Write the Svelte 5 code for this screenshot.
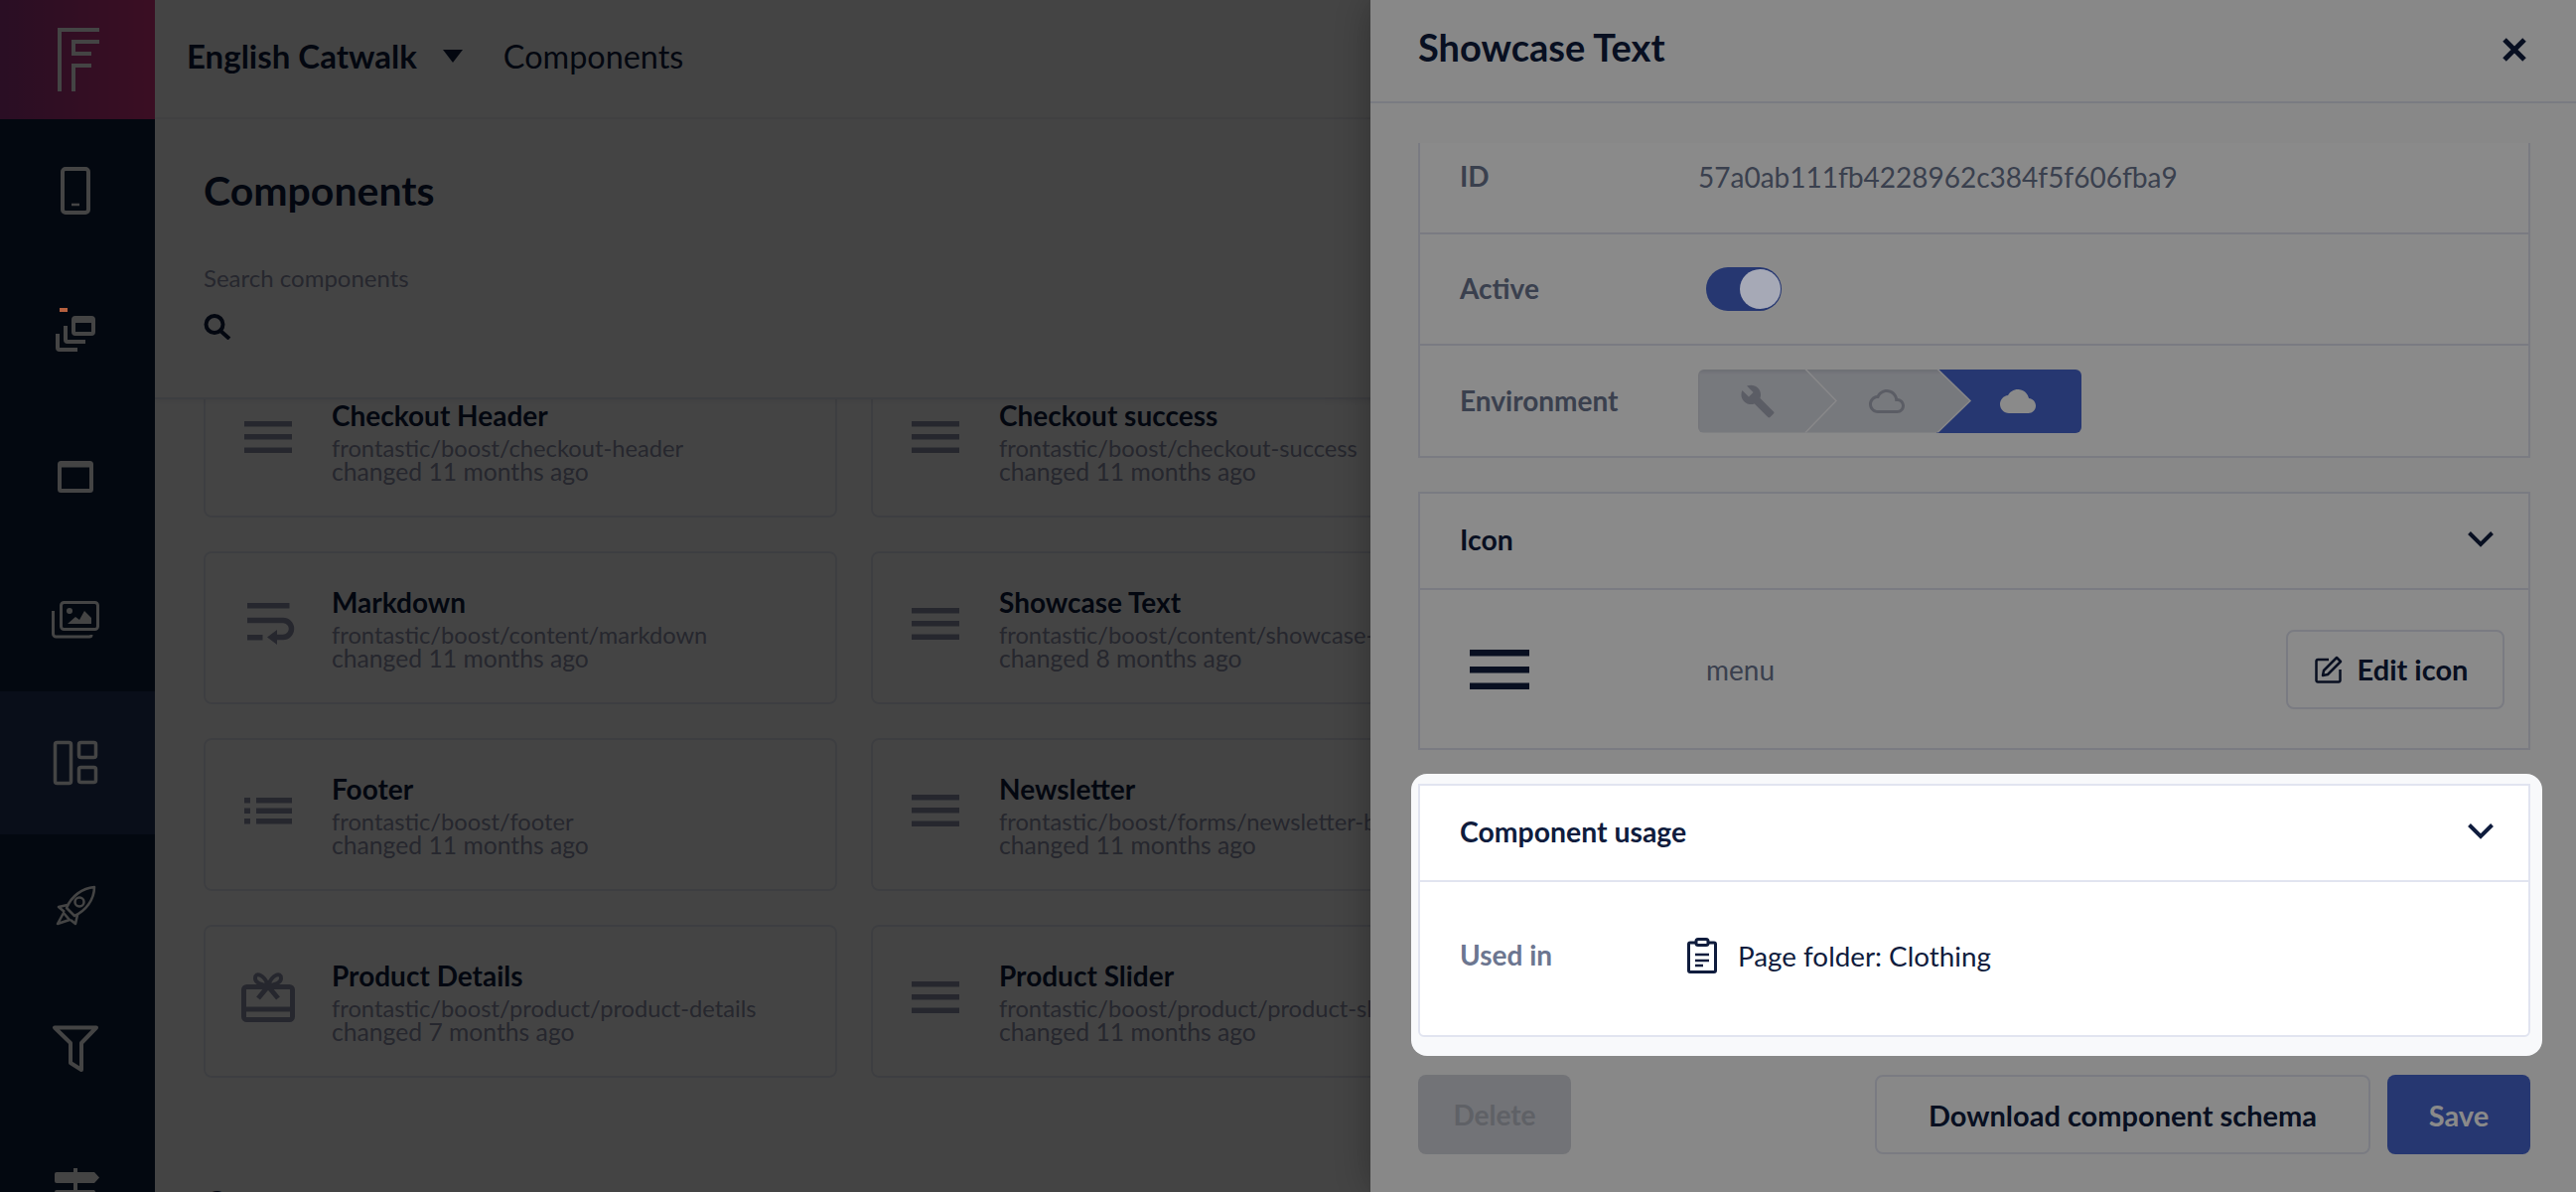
<script>
  const navItems = ['phone', 'pages', 'window', 'images', 'layout', 'rocket', 'filter', 'sign'];

  const cards = [
    { icon: 'menu', title: 'Checkout Header', path: 'frontastic/boost/checkout-header', age: '11 months' },
    { icon: 'menu', title: 'Checkout success', path: 'frontastic/boost/checkout-success', age: '11 months' },
    { icon: 'wrap', title: 'Markdown', path: 'frontastic/boost/content/markdown', age: '11 months' },
    { icon: 'menu', title: 'Showcase Text', path: 'frontastic/boost/content/showcase-text', age: '8 months' },
    { icon: 'list', title: 'Footer', path: 'frontastic/boost/footer', age: '11 months' },
    { icon: 'menu', title: 'Newsletter', path: 'frontastic/boost/forms/newsletter-block', age: '11 months' },
    { icon: 'gift', title: 'Product Details', path: 'frontastic/boost/product/product-details', age: '7 months' },
    { icon: 'menu', title: 'Product Slider', path: 'frontastic/boost/product/product-slider', age: '11 months' }
  ];
</script>

<div class="page">
  <aside class="sidebar">
    <div class="logo">
      <svg width="48" height="72" viewBox="0 0 48 72" fill="none" stroke="#fff" stroke-width="4">
        <path d="M8 68V6H48" />
        <path d="M48 18H22V30H40" />
        <path d="M40 42H22V68" />
      </svg>
    </div>
    {#each navItems as item}
      <div class="nav-item" class:active={item === 'layout'}>
        <svg class="nav-icon" width="48" height="48" viewBox="0 0 48 48" fill="none" stroke="#fff" stroke-width="4">
          {#if item === 'phone'}
            <rect x="11" y="2" width="26" height="44" rx="3" />
            <path d="M20 38H28" stroke-width="2.5" />
          {:else if item === 'pages'}
            <rect x="22" y="8" width="20" height="16" rx="2" />
            <path d="M22 10H42" stroke-width="6" />
            <path d="M14 16V30a2 2 0 0 0 2 2H34" />
            <path d="M6 24V38a2 2 0 0 0 2 2H26" />
          {:else if item === 'window'}
            <rect x="8" y="10" width="32" height="28" rx="1.5" />
            <path d="M8 12H40" stroke-width="5" />
          {:else if item === 'images'}
            <rect x="9.5" y="6.5" width="37" height="27" rx="3" stroke-width="3" />
            <path d="M1.500 15V38a3 3 0 0 0 3 3H38a2 2 0 0 0 2-2" stroke-width="3" />
            <circle cx="18" cy="15" r="3" fill="#fff" stroke="none" />
            <path d="M16 28L24 21L28 24L33 15L40 22V28Z" fill="#fff" stroke="none" />
          {:else if item === 'layout'}
            <rect x="3.500" y="3.500" width="16" height="41" rx="2" stroke-width="3.500" />
            <rect x="27.500" y="3.500" width="17" height="15" rx="2" stroke-width="3.500" />
            <rect x="27.500" y="28.500" width="17" height="15" rx="2" stroke-width="3.500" />
          {:else if item === 'rocket'}
            <g stroke-width="2.500" stroke-linejoin="round">
              <path d="M43 5C31 6 20 14 15 26L23 34C34 29 43 18 43 5Z" />
              <circle cx="28" cy="20" r="4.500" />
              <path d="M16 23L7 25L13 30" />
              <path d="M26 33L24 42L19 38" />
              <path d="M12 31L6 42L18 38Z" />
            </g>
          {:else if item === 'filter'}
            <path d="M3 2.500H45L30 18V45L19 38V18Z" stroke-linejoin="round" />
          {:else}
            <path d="M24 0V48" />
            <path d="M5 4H43L48 9.500L43 15H5a2 2 0 0 1-2-2V6a2 2 0 0 1 2-2Z" fill="#fff" stroke="none" />
            <path d="M5 22H43L46 27V34H3V24a2 2 0 0 1 2-2Z" fill="#fff" stroke="none" />
          {/if}
        </svg>
      </div>
    {/each}
  </aside>

  <main class="main">
    <header class="topbar">
      <span class="project">English Catwalk</span>
      <svg class="caret" width="20" height="13" viewBox="0 0 20 13"><path d="M0 0H20L10 13Z" fill="#0f1c3d" /></svg>
      <span class="crumb">Components</span>
    </header>

    <section class="search-head">
      <h1>Components</h1>
      <div class="search-label">Search components</div>
      <svg class="search-icon" width="28" height="26" viewBox="0 0 28 26" fill="none" stroke="#0f1c3d" stroke-width="4">
        <circle cx="11" cy="10.500" r="8.500" />
        <path d="M17 17L26 25" />
      </svg>
    </section>

    <div class="list">
      <div class="grid">
        {#each cards as card}
          <article class="card">
            <svg class="card-icon" width="54" height="54" viewBox="0 0 54 54" fill="#8e91ab">
              {#if card.icon === 'menu'}
                <rect x="3" y="11" width="48" height="5.500" />
                <rect x="3" y="24" width="48" height="5.500" />
                <rect x="3" y="37.500" width="48" height="5.500" />
              {:else if card.icon === 'wrap'}
                <rect x="6" y="6" width="42.500" height="5.500" />
                <rect x="6" y="38" width="15.500" height="5.500" />
                <path d="M6 23.500H42a8.500 8.500 0 0 1 0 17H31" fill="none" stroke="#8e91ab" stroke-width="5.500" />
                <path d="M26 40.500L36 33V48Z" />
              {:else if card.icon === 'list'}
                <rect x="3" y="14" width="6" height="5.500" />
                <rect x="3" y="24.500" width="6" height="5.500" />
                <rect x="3" y="35" width="6" height="5.500" />
                <rect x="15" y="14" width="36" height="5.500" />
                <rect x="15" y="24.500" width="36" height="5.500" />
                <rect x="15" y="35" width="36" height="5.500" />
              {:else}
                <g fill="none" stroke="#8e91ab" stroke-width="5">
                  <rect x="2.500" y="16.500" width="49" height="33" rx="3" />
                  <path d="M2 39H52" />
                  <path d="M27 15C23 4 14 1 14 8C14 12 20 15 27 15C34 15 40 12 40 8C40 1 31 4 27 15Z" stroke-width="4" />
                  <path d="M27 16L17 28M27 16L37 28" />
                </g>
              {/if}
            </svg>
            <div class="card-text">
              <h3>{card.title}</h3>
              <p class="card-path">{card.path}</p>
              <p class="card-age">changed {card.age} ago</p>
            </div>
          </article>
        {/each}
      </div>
      <h2 class="next-heading">Content</h2>
    </div>
  </main>

  <div class="backdrop"></div>

  <div class="panel">
    <header class="panel-head">
      <h2>Showcase Text</h2>
      <svg class="close" width="24" height="24" viewBox="0 0 24 24" stroke="#0f1c3d" stroke-width="5"><path d="M2 2L22 22M22 2L2 22" /></svg>
    </header>

    <div class="panel-body">
      <section class="box box-open">
        <div class="row row-id">
          <span class="label">ID</span>
          <span class="value">57a0ab111fb4228962c384f5f606fba9</span>
        </div>
        <div class="row row-active">
          <span class="label">Active</span>
          <div class="toggle"><span class="knob"></span></div>
        </div>
        <div class="row row-env">
          <span class="label">Environment</span>
          <div class="env">
            <div class="seg seg-dev">
              <svg width="36" height="36" viewBox="0 0 24 24" fill="#a9adbb"><path d="M22.700 19l-9.100-9.100c.9-2.300.4-5-1.500-6.900-2-2-5-2.400-7.400-1.300L9 6 6 9 1.600 4.700C.4 7.100.9 10.100 2.900 12.100c1.900 1.900 4.600 2.400 6.900 1.500l9.100 9.100c.4.4 1 .4 1.400 0l2.300-2.300c.5-.4.5-1.100.1-1.400z" /></svg>
            </div>
            <div class="seg seg-staging">
              <svg width="36" height="36" viewBox="0 0 24 24" fill="#a9adbb" fill-rule="evenodd"><path d="M19.350 10.040C18.670 6.590 15.640 4 12 4 9.110 4 6.600 5.640 5.350 8.040 2.340 8.360 0 10.910 0 14c0 3.310 2.690 6 6 6h13c2.760 0 5-2.240 5-5 0-2.640-2.050-4.780-4.650-4.960zM19 18H6c-2.210 0-4-1.790-4-4s1.790-4 4-4h.71C7.370 7.690 9.480 6 12 6c3.040 0 5.500 2.460 5.500 5.500v.5H19c1.660 0 3 1.340 3 3s-1.340 3-3 3z" /></svg>
            </div>
            <div class="seg-live">
              <svg width="36" height="36" viewBox="0 0 24 24" fill="#fff"><path d="M19.350 10.040C18.670 6.590 15.640 4 12 4 9.110 4 6.600 5.640 5.350 8.040 2.340 8.360 0 10.910 0 14c0 3.310 2.690 6 6 6h13c2.760 0 5-2.240 5-5 0-2.640-2.050-4.780-4.650-4.960z" /></svg>
            </div>
          </div>
        </div>
      </section>

      <section class="box">
        <div class="box-head">
          <h4>Icon</h4>
          <svg width="26" height="16" viewBox="0 0 26 16" fill="none" stroke="#0f1c3d" stroke-width="4"><path d="M1.500 1.500L13 13L24.500 1.500" /></svg>
        </div>
        <div class="icon-row">
          <svg class="big-menu" width="60" height="40" viewBox="0 0 60 40" fill="#0f1c3d">
            <rect width="60" height="6.500" />
            <rect y="17" width="60" height="6.500" />
            <rect y="33.500" width="60" height="6.500" />
          </svg>
          <span class="icon-name">menu</span>
          <button class="btn btn-edit">
            <svg width="28" height="28" viewBox="0 0 28 28" fill="none" stroke="#0f1c3d" stroke-width="2.500" stroke-linejoin="round">
              <path d="M14 4H3a1.500 1.500 0 0 0-1.500 1.500V25a1.500 1.500 0 0 0 1.500 1.500H24a1.500 1.500 0 0 0 1.500-1.500V14" />
              <path d="M22 2L26 6L13 19L8 20L9 15Z" />
            </svg>
            Edit icon
          </button>
        </div>
      </section>

      <div class="spot">
        <section class="box box-white">
          <div class="box-head">
            <h4>Component usage</h4>
            <svg width="26" height="16" viewBox="0 0 26 16" fill="none" stroke="#0f1c3d" stroke-width="4"><path d="M1.500 1.500L13 13L24.500 1.500" /></svg>
          </div>
          <div class="usage-row">
            <span class="label">Used in</span>
            <div class="usage">
              <svg width="30" height="36" viewBox="0 0 30 36" fill="none" stroke="#0f1c3d" stroke-width="3">
                <path d="M9 5H3a1.500 1.500 0 0 0-1.500 1.500V33a1.500 1.500 0 0 0 1.500 1.500H27a1.500 1.500 0 0 0 1.500-1.500V6.500A1.500 1.500 0 0 0 27 5H21" />
                <rect x="9" y="1.500" width="12" height="6" rx="2" />
                <path d="M8 17H22M8 23H22M8 28H16" stroke-width="2.500" />
              </svg>
              <span>Page folder: Clothing</span>
            </div>
          </div>
        </section>
      </div>

      <footer class="actions">
        <button class="btn btn-delete">Delete</button>
        <button class="btn btn-schema">Download component schema</button>
        <button class="btn btn-save">Save</button>
      </footer>
    </div>
  </div>

  <span class="stray-dot"></span>
</div>

<style>
  :global(body) {
    margin: 0;
    font-family: Lato, "Noto Sans", sans-serif;
    color: #0f1c3d;
  }

  h1, h2, h3, h4, p {
    margin: 0;
  }

  .page {
    position: relative;
    display: flex;
    height: 1200px;
    overflow: hidden;
    background: #fff;
  }

  .sidebar {
    flex: 0 0 156px;
    background: #0f213e;
  }

  .logo {
    display: flex;
    align-items: center;
    justify-content: center;
    height: 120px;
    padding-right: 4px;
    box-sizing: border-box;
    background: linear-gradient(90deg, #9c3686, #da3683);
  }

  .nav-item {
    display: flex;
    align-items: center;
    justify-content: center;
    height: 144px;
    padding-right: 4px;
    box-sizing: border-box;
  }

  .nav-item.active {
    background: #24365f;
  }

  .nav-icon {
    overflow: visible;
  }

  .main {
    flex: 1;
    display: flex;
    flex-direction: column;
    min-width: 0;
  }

  .topbar {
    display: flex;
    align-items: center;
    flex: none;
    height: 120px;
    padding: 0 0 6px 32px;
    box-sizing: border-box;
    border-bottom: 2px solid #f0f1f6;
    font-size: 33px;
  }

  .project {
    font-weight: 700;
  }

  .caret {
    margin: 0 41px 0 26px;
  }

  .crumb {
    font-size: 32.400px;
  }

  .search-head {
    position: relative;
    flex: none;
    height: 280px;
    padding-left: 49px;
    border-bottom: 2px solid #e5e7f0;
    box-shadow: 0 2px 6px rgba(15, 28, 61, 0.08);
    background: #fff;
  }

  h1 {
    padding-top: 49px;
    font-size: 41px;
    line-height: 46px;
    font-weight: 700;
  }

  .search-label {
    margin-top: 50px;
    font-size: 24px;
    line-height: 30px;
    color: #8e91ab;
  }

  .search-icon {
    display: block;
    margin-top: 21px;
  }

  .list {
    flex: 1;
    overflow: hidden;
    padding-left: 49px;
  }

  .grid {
    display: grid;
    grid-template-columns: 638px 638px;
    gap: 34px;
    margin-top: -35px;
  }

  .card {
    display: flex;
    align-items: center;
    height: 154px;
    box-sizing: border-box;
    padding-left: 36px;
    border: 2px solid #e5e7f0;
    border-radius: 8px;
    white-space: nowrap;
    overflow: hidden;
  }

  .card-icon {
    flex: none;
    margin: 0 37px 8px 0;
  }

  .card-text h3 {
    margin-bottom: 5px;
    font-size: 28px;
    line-height: 32px;
    font-weight: 700;
  }

  .card-text p {
    line-height: 24px;
    color: #8e91ab;
  }

  .card-path {
    font-size: 23.700px;
  }

  .card-age {
    font-size: 24.700px;
  }

  .next-heading {
    margin-top: 106px;
    font-size: 34px;
    line-height: 40px;
    font-weight: 700;
  }

  .backdrop {
    position: absolute;
    inset: 0;
    background: rgba(0, 0, 0, 0.5);
  }

  .panel {
    position: absolute;
    top: 0;
    right: 0;
    bottom: 0;
    z-index: 2;
    width: 1214px;
    background: #fcfcfc;
    box-shadow: 0 0 40px rgba(0, 0, 0, 0.3);
  }

  .panel-head {
    display: flex;
    align-items: center;
    justify-content: space-between;
    height: 102px;
    padding: 0 50px 0 48px;
    border-bottom: 2px solid #e1e4f0;
  }

  .panel-head h2 {
    font-size: 38px;
    font-weight: 700;
    line-height: 44px;
    margin-bottom: 8px;
  }

  .close {
    margin-bottom: 3px;
  }

  .panel-body {
    display: flex;
    flex-direction: column;
    gap: 34px;
    padding: 40px 46px 0 48px;
  }

  .box {
    border: 2px solid #e1e4f0;
    background: #fff;
  }

  .box-open {
    border-top: 0;
  }

  .row {
    display: flex;
    align-items: center;
    padding-left: 40px;
    border-bottom: 2px solid #e1e4f0;
  }

  .row:last-child {
    border-bottom: 0;
  }

  .row-id {
    height: 92px;
    padding-bottom: 22px;
    box-sizing: border-box;
  }

  .row-active {
    height: 110px;
  }

  .row-env {
    height: 111px;
  }

  .label {
    flex: 0 0 240px;
    margin-bottom: 2px;
    font-size: 28px;
    font-weight: 700;
    color: #6c7690;
  }

  .value {
    font-size: 28px;
    color: #6c7690;
  }

  .toggle {
    position: relative;
    width: 76px;
    height: 44px;
    margin-left: 8px;
    border-radius: 22px;
    background: #4766d1;
  }

  .knob {
    position: absolute;
    top: 2px;
    right: 1px;
    z-index: 11;
    width: 41px;
    height: 40px;
    border-radius: 50%;
    background: #a6a9b6;
  }

  .env {
    display: flex;
    width: 386px;
    height: 64px;
    border-radius: 6px;
    overflow: hidden;
  }

  .seg {
    position: relative;
    display: flex;
    align-items: center;
    justify-content: center;
    filter: drop-shadow(2px 0 0 #fbfbfe);
  }

  .seg::before {
    content: "";
    position: absolute;
    inset: 0;
    background: #dddfe7;
    z-index: -1;
    box-shadow: inset 0 3px 3px rgba(15, 28, 61, 0.08);
  }

  .seg-dev {
    z-index: 3;
    flex: 0 0 138px;
    padding-right: 19px;
    box-sizing: border-box;
  }

  .seg-dev::before {
    clip-path: polygon(0 0, 107px 0, 100% 50%, 107px 100%, 0 100%);
  }

  .seg-staging {
    z-index: 2;
    flex: 0 0 166px;
    margin-left: -31px;
  }

  .seg-staging::before {
    clip-path: polygon(0 0, 133px 0, 100% 50%, 133px 100%, 0 100%);
  }

  .seg-live {
    display: flex;
    align-items: center;
    justify-content: center;
    flex: 0 0 146px;
    margin-left: -33px;
    padding-left: 18px;
    box-sizing: border-box;
    background: #4766d1;
  }

  .box-head {
    display: flex;
    align-items: center;
    justify-content: space-between;
    height: 97px;
    padding: 0 35px 3px 40px;
    box-sizing: border-box;
    border-bottom: 2px solid #e1e4f0;
  }

  .box-head h4 {
    font-size: 28.400px;
    font-weight: 700;
  }

  .icon-row {
    display: flex;
    align-items: center;
    height: 159px;
    padding: 0 24px 0 50px;
  }

  .big-menu {
    flex: none;
  }

  .icon-name {
    flex: 1;
    margin-left: 178px;
    font-size: 28px;
    color: #6c7690;
  }

  .btn {
    height: 80px;
    box-sizing: border-box;
    border: 2px solid #e1e4f0;
    border-radius: 8px;
    background: transparent;
    font: 700 29px Lato, "Noto Sans", sans-serif;
    color: #0f1c3d;
  }

  .btn-edit {
    display: flex;
    align-items: center;
    justify-content: center;
    gap: 15px;
    width: 220px;
    padding: 0 8px 0 0;
  }

  .spot {
    position: relative;
    z-index: 10;
    margin: -10px -12px -19px -7px;
    padding: 10px 12px 19px 7px;
    border-radius: 16px;
    background: #f8f9fb;
    box-shadow: 0 0 0 3000px rgba(0, 0, 0, 0.46);
  }

  .box-white {
    border-radius: 0 0 6px 6px;
  }

  .usage-row {
    display: flex;
    align-items: center;
    height: 154px;
    padding: 0 0 6px 40px;
    box-sizing: border-box;
  }

  .usage {
    display: flex;
    align-items: center;
    gap: 21px;
    margin-left: -11px;
    font-size: 27.800px;
  }

  .actions {
    display: flex;
    gap: 17px;
    margin-top: 4px;
  }

  .btn-delete {
    width: 154px;
    margin-right: auto;
    border: 0;
    background: #d3d5dc;
    color: #b0b3bd;
    font-size: 28px;
  }

  .btn-schema {
    width: 499px;
  }

  .btn-save {
    width: 144px;
    border: 0;
    background: #4766d1;
    color: #fff;
  }

  .stray-dot {
    position: absolute;
    left: 60px;
    top: 310px;
    z-index: 20;
    width: 8px;
    height: 4px;
    background: #b5603f;
  }
</style>
